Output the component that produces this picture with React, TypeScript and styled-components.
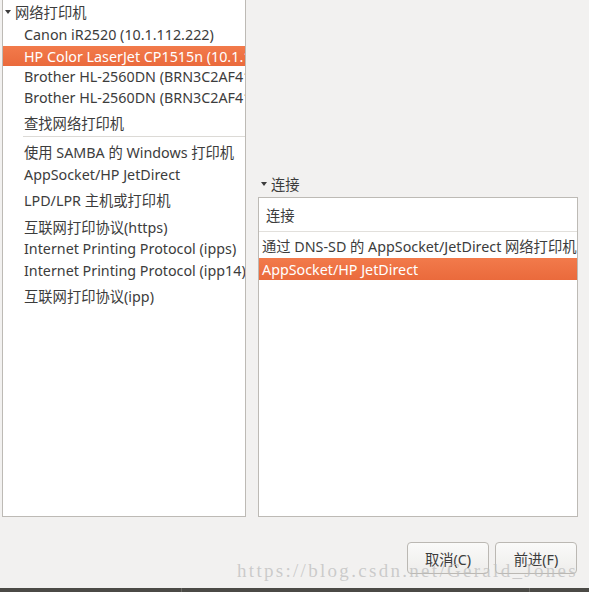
import React from "react";
import styled, { createGlobalStyle } from "styled-components";

const GlobalStyle = createGlobalStyle`
  html, body {
    margin: 0;
    padding: 0;
    background: #f2f1f0;
  }
  body {
    font-family: "Noto Sans", "Noto Sans CJK SC", sans-serif;
    color: #3c3c3c;
  }
`;

const FONT = `"Noto Sans", "Noto Sans CJK SC", sans-serif`;

const Window = styled.div`
  position: relative;
  width: 589px;
  height: 592px;
  background: #f2f1f0;
  display: flex;
  flex-direction: column;
  overflow: hidden;
  font-family: ${FONT};
  font-size: 14.3px;
`;

const Main = styled.div`
  display: flex;
  height: 517px;
`;

const DeviceList = styled.div`
  margin-left: 2px;
  width: 242px;
  height: 516px;
  background: #fff;
  border: 1px solid #bdbab5;
  border-top: none;
  overflow: hidden;
`;

const Row = styled.div<{ $h: number; $indent: number; $selected?: boolean }>`
  height: ${(p) => p.$h}px;
  display: flex;
  align-items: center;
  padding-left: ${(p) => p.$indent}px;
  white-space: nowrap;
  color: ${(p) => (p.$selected ? "#fff" : "#3c3c3c")};
  background: ${(p) =>
    p.$selected ? "linear-gradient(#f27a4b, #ea6a3c)" : "transparent"};
`;

const Triangle = styled.span`
  display: inline-block;
  width: 0;
  height: 0;
  border-left: 3.5px solid transparent;
  border-right: 3.5px solid transparent;
  border-top: 4px solid #3c3c3c;
  margin-right: 4px;
`;

const Separator = styled.div`
  height: 1px;
  margin-left: 20px;
  background: #dcdad6;
`;

const RightSide = styled.div`
  margin-left: 12px;
  width: 320px;
  display: flex;
  flex-direction: column;
  justify-content: flex-end;
`;

const ExpanderLabel = styled.div`
  height: 19px;
  padding: 0 0 4px 3px;
  display: flex;
  align-items: center;
`;

const ConnBox = styled.div`
  height: 318px;
  background: #fff;
  border: 1px solid #bdbab5;
  overflow: hidden;
`;

const ConnHeader = styled.div`
  height: 33px;
  display: flex;
  align-items: center;
  padding-left: 7px;
  border-bottom: 1px solid #e2e0dc;
`;

const Footer = styled.div`
  flex: 1;
  display: flex;
  justify-content: flex-end;
  align-items: flex-start;
  gap: 6px;
  padding: 25px 12px 0 0;
`;

const Button = styled.button`
  width: 82px;
  height: 32px;
  border: 1px solid #bbb8b3;
  border-radius: 4px;
  background: linear-gradient(#fafaf9, #eeedeb);
  font-family: ${FONT};
  font-size: 14.3px;
  color: #3c3c3c;
  padding: 0;
`;

const BottomStrip = styled.div`
  height: 4px;
  display: flex;
  background: #4b4a46;
`;

const StripPart = styled.div<{ $w: number }>`
  width: ${(p) => p.$w}px;
  border-right: 1px solid #6a6964;
`;

const Watermark = styled.div`
  position: absolute;
  left: 237px;
  top: 560px;
  font-family: "Liberation Serif", serif;
  font-size: 19px;
  letter-spacing: 2.3px;
  color: rgba(190, 190, 190, 0.75);
  pointer-events: none;
  white-space: nowrap;
`;

type Item = { text: string; h: number; selected?: boolean };

const printers: Item[] = [
  { text: "Canon iR2520 (10.1.112.222)", h: 23 },
  { text: "HP Color LaserJet CP1515n (10.1.112.88)", h: 20, selected: true },
  { text: "Brother HL-2560DN (BRN3C2AF4123456)", h: 21 },
  { text: "Brother HL-2560DN (BRN3C2AF4123457)", h: 21 },
  { text: "查找网络打印机", h: 28 },
];

const protocols: Item[] = [
  { text: "使用 SAMBA 的 Windows 打印机", h: 28 },
  { text: "AppSocket/HP JetDirect", h: 18 },
  { text: "LPD/LPR 主机或打印机", h: 32 },
  { text: "互联网打印协议(https)", h: 22 },
  { text: "Internet Printing Protocol (ipps)", h: 22 },
  { text: "Internet Printing Protocol (ipp14)", h: 22 },
  { text: "互联网打印协议(ipp)", h: 28 },
];

export default function App() {
  return (
    <Window>
      <GlobalStyle />
      <Main>
        <DeviceList>
          <Row $h={23} $indent={2}>
            <Triangle />
            网络打印机
          </Row>
          {printers.map((p, i) => (
            <Row key={i} $h={p.h} $indent={21} $selected={p.selected}>
              {p.text}
            </Row>
          ))}
          <Separator />
          {protocols.map((p, i) => (
            <Row key={i} $h={p.h} $indent={21}>
              {p.text}
            </Row>
          ))}
        </DeviceList>
        <RightSide>
          <ExpanderLabel>
            <Triangle />
            连接
          </ExpanderLabel>
          <ConnBox>
            <ConnHeader>连接</ConnHeader>
            <Row $h={26} $indent={3}>
              通过 DNS-SD 的 AppSocket/JetDirect 网络打印机
            </Row>
            <Row $h={22} $indent={3} $selected>
              AppSocket/HP JetDirect
            </Row>
          </ConnBox>
        </RightSide>
      </Main>
      <Footer>
        <Button>取消(C)</Button>
        <Button>前进(F)</Button>
      </Footer>
      <BottomStrip>
        <StripPart $w={181} />
        <StripPart $w={347} />
      </BottomStrip>
      <Watermark>https://blog.csdn.net/Gerald_Jones</Watermark>
    </Window>
  );
}
